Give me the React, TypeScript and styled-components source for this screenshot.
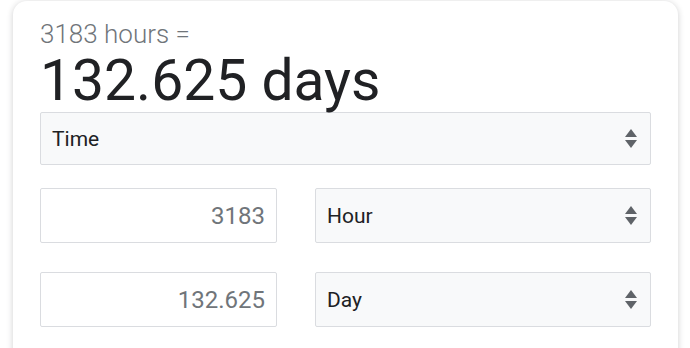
import React from "react";
import styled, { createGlobalStyle } from "styled-components";

const GlobalStyle = createGlobalStyle`
  html, body {
    margin: 0;
    padding: 0;
    background: #ffffff;
    font-family: Roboto, "Liberation Sans", Arial, sans-serif;
    overflow: hidden;
  }
`;

const units = {
  from: { value: "3183", unit: "Hour" },
  to: { value: "132.625", unit: "Day" },
};

const Arrows = () => (
  <svg width="12" height="19" viewBox="0 0 12 19" aria-hidden="true">
    <path d="M6 0 L12 8 L0 8 Z" fill="#5f6368" />
    <path d="M0 11 L12 11 L6 19 Z" fill="#5f6368" />
  </svg>
);

const App = () => {
  return (
    <>
      <GlobalStyle />
      <Page>
        <Card>
          <Question>3183 hours =</Question>
          <Answer>132.625 days</Answer>
          <Select wide>
            <SelectLabel>Time</SelectLabel>
            <Arrows />
          </Select>
          <ConvertGrid>
            {[units.from, units.to].map((row) => (
              <React.Fragment key={row.unit}>
                <ValueInput readOnly value={row.value} />
                <Select>
                  <SelectLabel>{row.unit}</SelectLabel>
                  <Arrows />
                </Select>
              </React.Fragment>
            ))}
          </ConvertGrid>
        </Card>
      </Page>
    </>
  );
};

const Page = styled.div`
  width: 690px;
  height: 348px;
  padding: 1px 12px 0 13px;
  box-sizing: border-box;
  overflow: hidden;
`;

const Card = styled.div`
  background: #ffffff;
  border-radius: 14px;
  box-shadow: 0 1px 6px rgba(32, 33, 36, 0.22);
  padding: 18px 27px 40px 27px;
  min-height: 400px;
  box-sizing: border-box;
`;

const Question = styled.div`
  font-size: 26px;
  font-weight: 300;
  line-height: 30px;
  color: #70757a;
`;

const Answer = styled.div`
  font-size: 57px;
  line-height: 63px;
  color: #202124;
`;

const Select = styled.div<{ wide?: boolean }>`
  display: flex;
  align-items: center;
  justify-content: space-between;
  height: ${(p) => (p.wide ? "53px" : "55px")};
  padding: 0 13px 0 11px;
  box-sizing: border-box;
  background: #f8f9fa;
  border: 1px solid #dadce0;
  border-radius: 2px;
`;

const SelectLabel = styled.span`
  font-size: 21px;
  color: #202124;
`;

const ConvertGrid = styled.div`
  display: grid;
  grid-template-columns: 237px 336px;
  column-gap: 38px;
  row-gap: 29px;
  margin-top: 23px;
`;

const ValueInput = styled.input`
  height: 55px;
  box-sizing: border-box;
  border: 1px solid #dadce0;
  border-radius: 2px;
  padding: 0 11px;
  font-family: inherit;
  font-size: 24px;
  color: #70757a;
  text-align: right;
  background: #ffffff;
  outline: none;
  width: 100%;
`;

export default App;
